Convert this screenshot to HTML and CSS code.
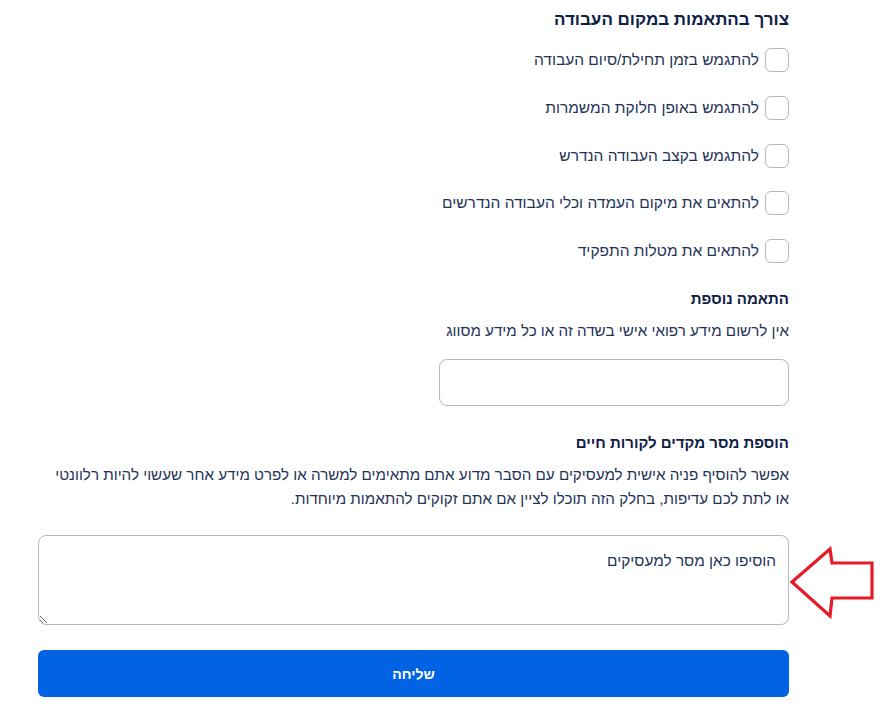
FILE: index.html
```html
<!DOCTYPE html>
<html lang="he" dir="rtl">
<head>
<meta charset="utf-8">
<title>טופס</title>
<link rel="stylesheet" href="styles.css">
</head>
<body>
<main class="form">
  <h2 class="title">צורך בהתאמות במקום העבודה</h2>
  <ul class="checks">
    <li class="check"><span class="box"></span><span class="label">להתגמש בזמן תחילת/סיום העבודה</span></li>
    <li class="check"><span class="box"></span><span class="label">להתגמש באופן חלוקת המשמרות</span></li>
    <li class="check"><span class="box"></span><span class="label">להתגמש בקצב העבודה הנדרש</span></li>
    <li class="check"><span class="box"></span><span class="label">להתאים את מיקום העמדה וכלי העבודה הנדרשים</span></li>
    <li class="check"><span class="box"></span><span class="label">להתאים את מטלות התפקיד</span></li>
  </ul>

  <h2 class="title title-2">התאמה נוספת</h2>
  <p class="hint">אין לרשום מידע רפואי אישי בשדה זה או כל מידע מסווג</p>
  <input class="field" type="text">

  <h2 class="title title-3">הוספת מסר מקדים לקורות חיים</h2>
  <p class="desc">אפשר להוסיף פניה אישית למעסיקים עם הסבר מדוע אתם מתאימים למשרה או לפרט מידע אחר שעשוי להיות רלוונטי או לתת לכם עדיפות, בחלק הזה תוכלו לציין אם אתם זקוקים להתאמות מיוחדות.</p>
  <div class="area-wrap">
    <textarea class="area" placeholder="הוסיפו כאן מסר למעסיקים"></textarea>
    <svg class="arrow" width="90" height="76" viewBox="0 0 90 76">
      <polygon points="3,36 41,3 43,17 83,17 83,52 43,52 41,70" fill="none" stroke="#e51b2a" stroke-width="3.2" stroke-linejoin="miter"/>
    </svg>
  </div>
  <button class="submit" type="button">שליחה</button>
</main>
</body>
</html>
```

FILE: styles.css
```css
html, body {
  margin: 0;
  padding: 0;
  background: #ffffff;
}
body {
  font-family: "Liberation Sans", "DejaVu Sans", sans-serif;
  color: #1f3358;
}
.form {
  width: 751px;
  margin-right: 100px;
  padding-top: 8px;
  padding-bottom: 13px;
  display: flex;
  flex-direction: column;
}
.title {
  margin: 0;
  font-size: 17px;
  line-height: 24px;
  font-weight: bold;
  color: #0e2046;
}
.checks {
  list-style: none;
  margin: 16px 0 0;
  padding: 0;
  display: flex;
  flex-direction: column;
  gap: 23.75px;
}
.check {
  display: flex;
  align-items: center;
  gap: 6px;
  height: 24px;
}
.box {
  width: 22px;
  height: 22px;
  border: 1px solid #b9b6ca;
  border-radius: 6px;
  flex: none;
}
.label {
  font-size: 15.5px;
  line-height: 24px;
}
.title-2 {
  margin-top: 24px;
  font-size: 15px;
}
.hint {
  margin: 8px 0 0;
  font-size: 15.2px;
  line-height: 24px;
}
.field {
  margin-top: 16px;
  width: 350px;
  height: 47px;
  box-sizing: border-box;
  border: 1px solid #b9b6ca;
  border-radius: 8px;
  align-self: flex-start;
  font: inherit;
}
.title-3 {
  margin-top: 25px;
  font-size: 15px;
}
.desc {
  margin: 8px 0 0;
  font-size: 15.2px;
  line-height: 24px;
}
.area-wrap {
  position: relative;
  margin-top: 24px;
}
.area {
  display: block;
  width: 100%;
  height: 90px;
  box-sizing: border-box;
  border: 1px solid #b9b6ca;
  border-radius: 8px;
  padding: 13px 12px;
  font-family: inherit;
  font-size: 15.4px;
  line-height: 24px;
  color: #1f3358;
}
.area::placeholder {
  color: #1f3358;
  opacity: 1;
}
.arrow {
  position: absolute;
  left: 751px;
  top: 11px;
}
.submit {
  margin-top: 25px;
  height: 47px;
  border: none;
  border-radius: 6px;
  background: #0262e4;
  color: #ffffff;
  font-family: inherit;
  font-size: 14px;
  font-weight: bold;
}
```
